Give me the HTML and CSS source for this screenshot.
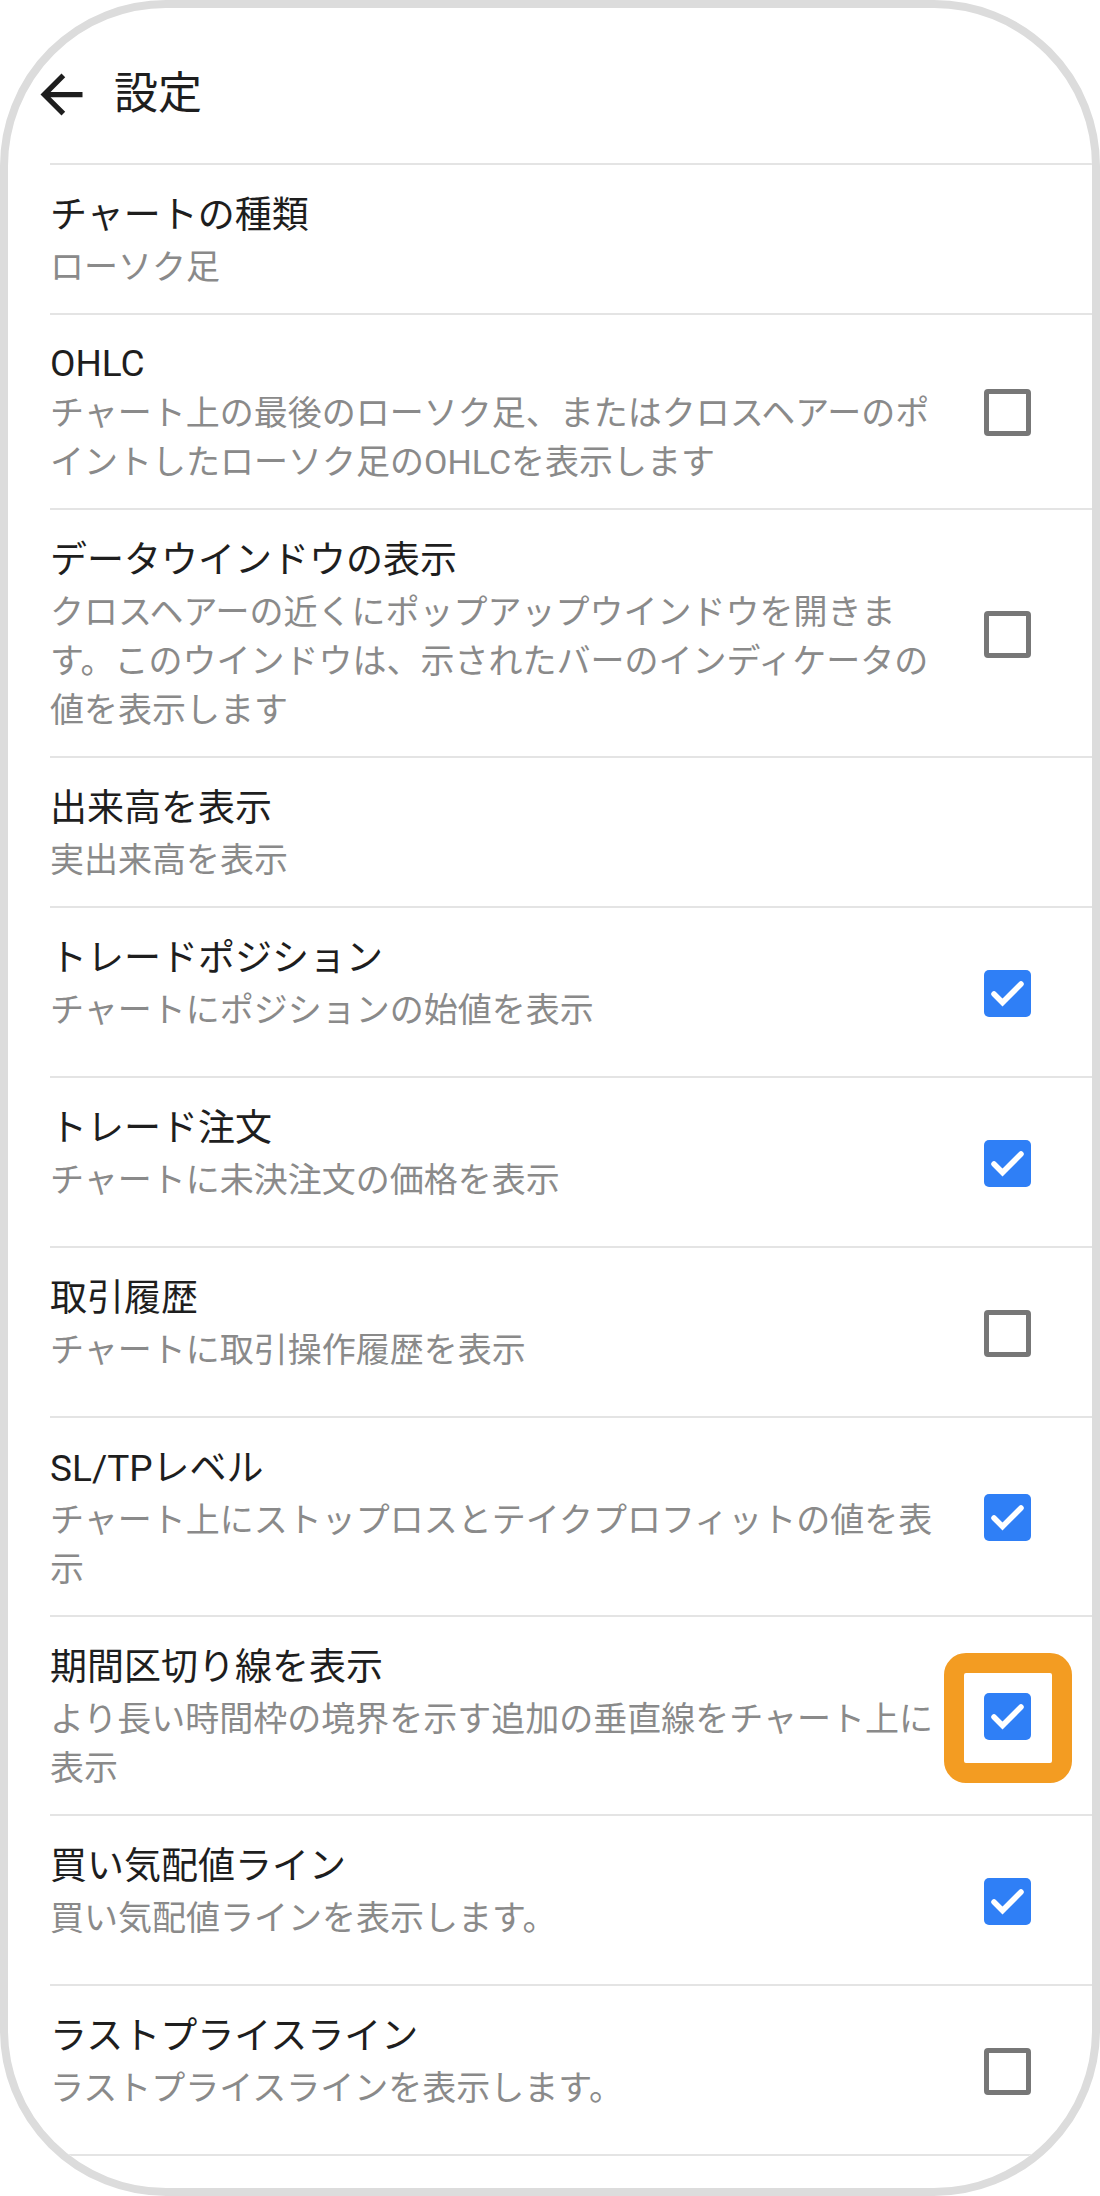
FILE: index.html
```html
<!DOCTYPE html>
<html lang="ja">
<head>
  <meta charset="UTF-8">
  <title>設定</title>
  <link rel="stylesheet" href="styles.css">
</head>
<body>

<div class="phone">
  <header class="topbar">
    <svg class="back" viewBox="0 0 24 24"><path d="M20 11H7.83l5.59-5.59L12 4l-8 8 8 8 1.41-1.41L7.83 13H20v-2z"/></svg>
    <h1>設定</h1>
  </header>

  <ul class="prefs">
    <li class="pref">
      <div class="pref-text">
        <div class="pref-title">チャートの種類</div>
        <div class="pref-sub">ローソク足</div>
      </div>
    </li>

    <li class="pref">
      <div class="pref-text">
        <div class="pref-title latin">OHLC</div>
        <div class="pref-sub">チャート上の最後のローソク足、またはクロスヘアーのポイントしたローソク足のOHLCを表示します</div>
      </div>
      <div class="pref-side"><span class="check"></span></div>
    </li>

    <li class="pref">
      <div class="pref-text">
        <div class="pref-title">データウインドウの表示</div>
        <div class="pref-sub">クロスヘアーの近くにポップアップウインドウを開きます。このウインドウは、示されたバーのインディケータの値を表示します</div>
      </div>
      <div class="pref-side"><span class="check"></span></div>
    </li>

    <li class="pref">
      <div class="pref-text">
        <div class="pref-title">出来高を表示</div>
        <div class="pref-sub">実出来高を表示</div>
      </div>
    </li>

    <li class="pref">
      <div class="pref-text">
        <div class="pref-title">トレードポジション</div>
        <div class="pref-sub">チャートにポジションの始値を表示</div>
      </div>
      <div class="pref-side"><span class="check on"><svg viewBox="0 0 47 47"><polyline points="10,24 18.5,32.5 37,14"/></svg></span></div>
    </li>

    <li class="pref">
      <div class="pref-text">
        <div class="pref-title">トレード注文</div>
        <div class="pref-sub">チャートに未決注文の価格を表示</div>
      </div>
      <div class="pref-side"><span class="check on"><svg viewBox="0 0 47 47"><polyline points="10,24 18.5,32.5 37,14"/></svg></span></div>
    </li>

    <li class="pref">
      <div class="pref-text">
        <div class="pref-title">取引履歴</div>
        <div class="pref-sub">チャートに取引操作履歴を表示</div>
      </div>
      <div class="pref-side"><span class="check"></span></div>
    </li>

    <li class="pref">
      <div class="pref-text">
        <div class="pref-title">SL/TPレベル</div>
        <div class="pref-sub">チャート上にストップロスとテイクプロフィットの値を表示</div>
      </div>
      <div class="pref-side"><span class="check on"><svg viewBox="0 0 47 47"><polyline points="10,24 18.5,32.5 37,14"/></svg></span></div>
    </li>

    <li class="pref">
      <div class="pref-text">
        <div class="pref-title">期間区切り線を表示</div>
        <div class="pref-sub">より長い時間枠の境界を示す追加の垂直線をチャート上に表示</div>
      </div>
      <div class="pref-side">
        <span class="check on"><svg viewBox="0 0 47 47"><polyline points="10,24 18.5,32.5 37,14"/></svg></span>
        <span class="highlight"></span>
      </div>
    </li>

    <li class="pref">
      <div class="pref-text">
        <div class="pref-title">買い気配値ライン</div>
        <div class="pref-sub">買い気配値ラインを表示します。</div>
      </div>
      <div class="pref-side"><span class="check on"><svg viewBox="0 0 47 47"><polyline points="10,24 18.5,32.5 37,14"/></svg></span></div>
    </li>

    <li class="pref">
      <div class="pref-text">
        <div class="pref-title">ラストプライスライン</div>
        <div class="pref-sub">ラストプライスラインを表示します。</div>
      </div>
      <div class="pref-side"><span class="check"></span></div>
    </li>
  </ul>
</div>

</body>
</html>
```

FILE: styles.css
```css
body { margin: 0; background: #fff; font-family: Roboto, "Noto Sans CJK JP", sans-serif; color: #1e1e1e; }
.phone { height: 2196px; box-sizing: border-box; border: 8px solid #dcdcdc; border-radius: 166px; overflow: hidden; background: #fff; }

.topbar { display: flex; align-items: center; gap: 21px; height: 155px; box-sizing: border-box; padding: 17px 0 0 22px; }
.back { width: 63px; height: 63px; fill: #1e1e1e; flex: none; }
.topbar h1 { margin: 0; font-size: 44px; font-weight: 400; line-height: 1; }

.prefs { list-style: none; margin: 0 0 0 42px; padding: 0; border-bottom: 2px solid #e4e4e4; }
.pref { display: flex; align-items: center; padding: 23px 0 21px; border-top: 2px solid #e4e4e4; }
.pref-text { align-self: flex-start; width: 900px; }
.pref-title { font-size: 37px; line-height: 55px; color: #1e1e1e; }
.pref-title.latin { line-height: 51px; }
.pref-sub { font-size: 34px; line-height: 49px; color: #8a8a8a; }

.pref-side { position: relative; display: flex; align-items: center; min-height: 124px; margin-left: 34px; }
.check { display: block; width: 47px; height: 47px; box-sizing: border-box; border: 5px solid #777; border-radius: 4px; }
.check.on { border: none; background: #2f7ff6; border-radius: 5px; }
.check svg { display: block; width: 47px; height: 47px; }
.check polyline { fill: none; stroke: #fff; stroke-width: 5.5; stroke-linecap: round; stroke-linejoin: miter; }

.highlight { position: absolute; left: -40px; top: 50%; width: 128px; height: 130px; margin-top: -64px; box-sizing: border-box; border: 20px solid #f39c22; border-radius: 22px; }
```
